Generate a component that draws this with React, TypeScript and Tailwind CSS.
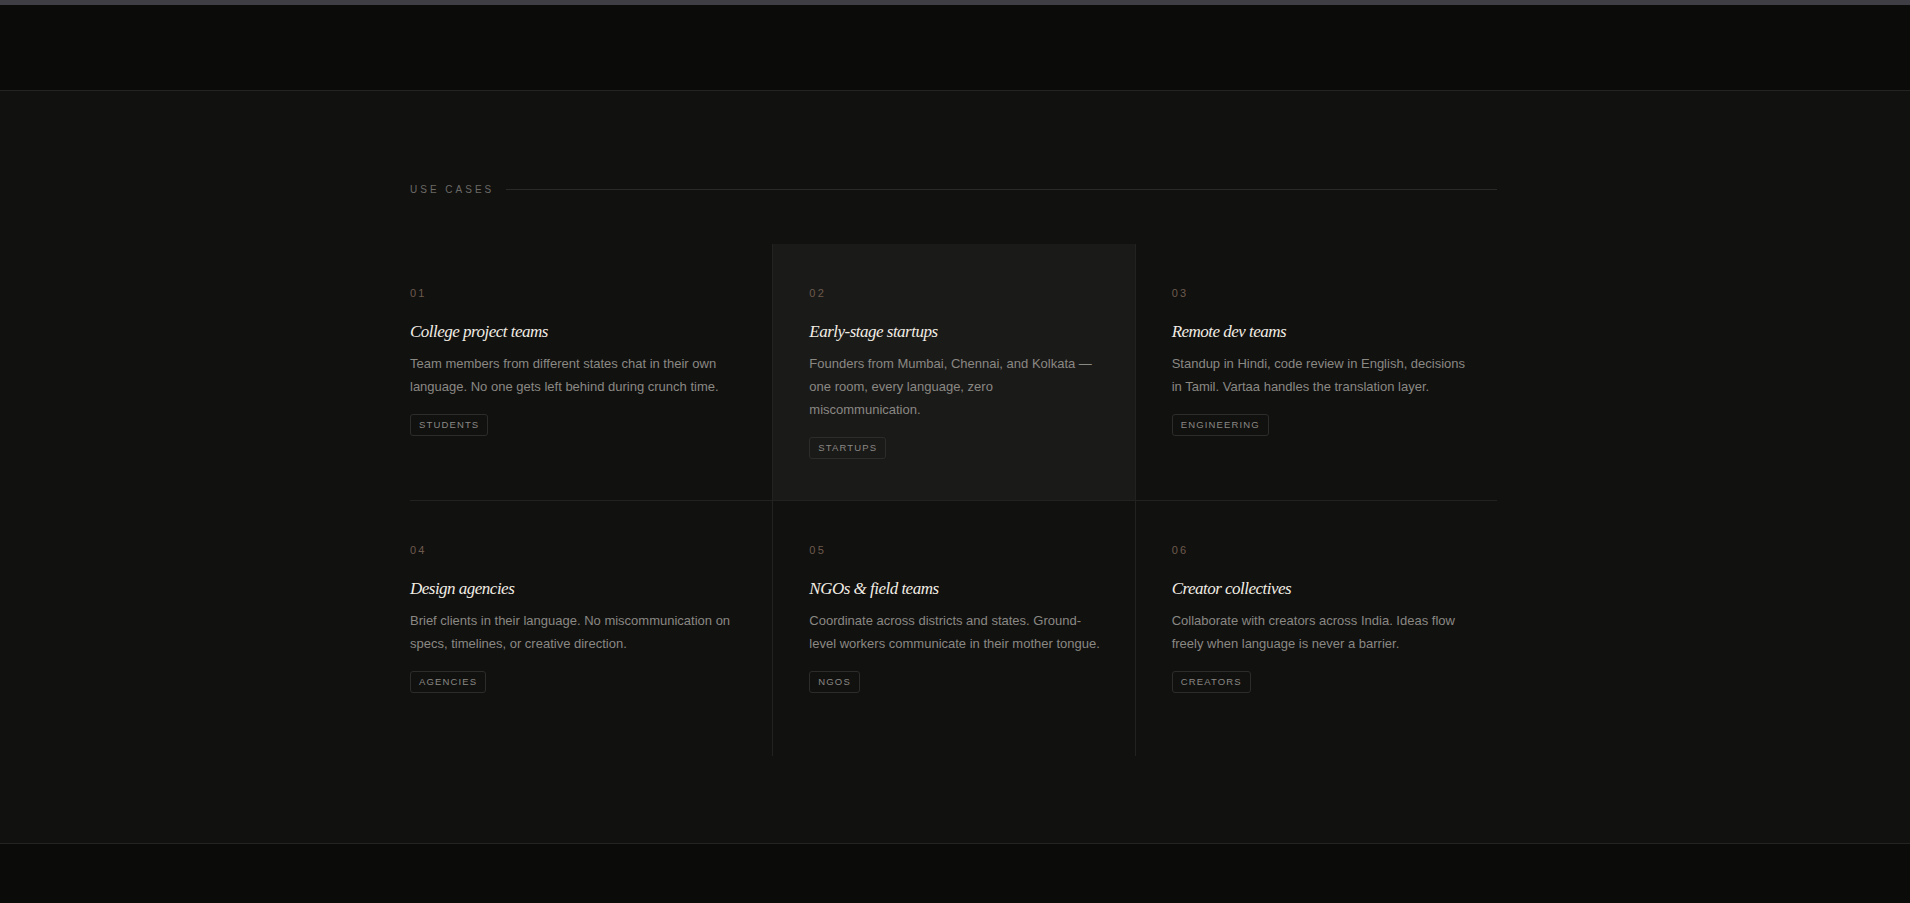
const items = [
  { n: "01", t: "College project teams", d: "Team members from different states chat in their own language. No one gets left behind during crunch time.", tag: "STUDENTS" },
  { n: "02", t: "Early-stage startups", d: "Founders from Mumbai, Chennai, and Kolkata — one room, every language, zero miscommunication.", tag: "STARTUPS" },
  { n: "03", t: "Remote dev teams", d: "Standup in Hindi, code review in English, decisions in Tamil. Vartaa handles the translation layer.", tag: "ENGINEERING" },
  { n: "04", t: "Design agencies", d: "Brief clients in their language. No miscommunication on specs, timelines, or creative direction.", tag: "AGENCIES" },
  { n: "05", t: "NGOs & field teams", d: "Coordinate across districts and states. Ground-level workers communicate in their mother tongue.", tag: "NGOS" },
  { n: "06", t: "Creator collectives", d: "Collaborate with creators across India. Ideas flow freely when language is never a barrier.", tag: "CREATORS" },
];

export default function App() {
  return (
    <div className="min-h-[903px] bg-[#0b0b0a] flex flex-col" style={{ fontFamily: "'Liberation Sans', Arial, sans-serif" }}>
      <div className="h-[5px] bg-[#3f3e44]" />
      <div className="h-[86px] border-b border-[#242423]" />
      <section className="bg-[#111110] border-b border-[#242423] pt-[91px] pb-[87px]">
        <div className="w-[1087px] ml-[410px]">
          <div className="flex items-center gap-[12px] h-[14px]">
            <span className="text-[10px] tracking-[0.3em] text-[#6b6a66]">USE CASES</span>
            <div className="flex-1 h-px bg-[#2a2a28]" />
          </div>
          <div className="grid grid-cols-3 mt-[48px]">
            {items.map((it, i) => (
              <div
                key={it.n}
                className={`h-[256px] pt-[42px] ${i % 3 === 0 ? "pr-[36px]" : "pl-[36px] pr-[30px] border-l border-[#222221]"} ${i >= 3 ? "border-t border-[#222221]" : ""} ${i === 1 ? "bg-[#1a1a19]" : ""}`}
              >
                <div className="h-[14px] text-[11px] tracking-[0.2em] text-[#6e5a4c] leading-[14px]">{it.n}</div>
                <div className="mt-[20px] h-[24px] leading-[24px] text-[17px] italic text-[#f2ede4] tracking-[-0.03em]" style={{ fontFamily: "'Liberation Serif', serif" }}>{it.t}</div>
                <p className="mt-[8px] text-[13px] leading-[23px] text-[#8a8883]">{it.d}</p>
                <div className="mt-[16px] inline-flex items-center h-[22px] px-[8px] border border-[#2c2c2a] rounded-[3px] text-[9.5px] tracking-[0.12em] text-[#8a8883]">{it.tag}</div>
              </div>
            ))}
          </div>
        </div>
      </section>
      <div className="flex-1 bg-[#0b0b0a]" />
    </div>
  );
}
